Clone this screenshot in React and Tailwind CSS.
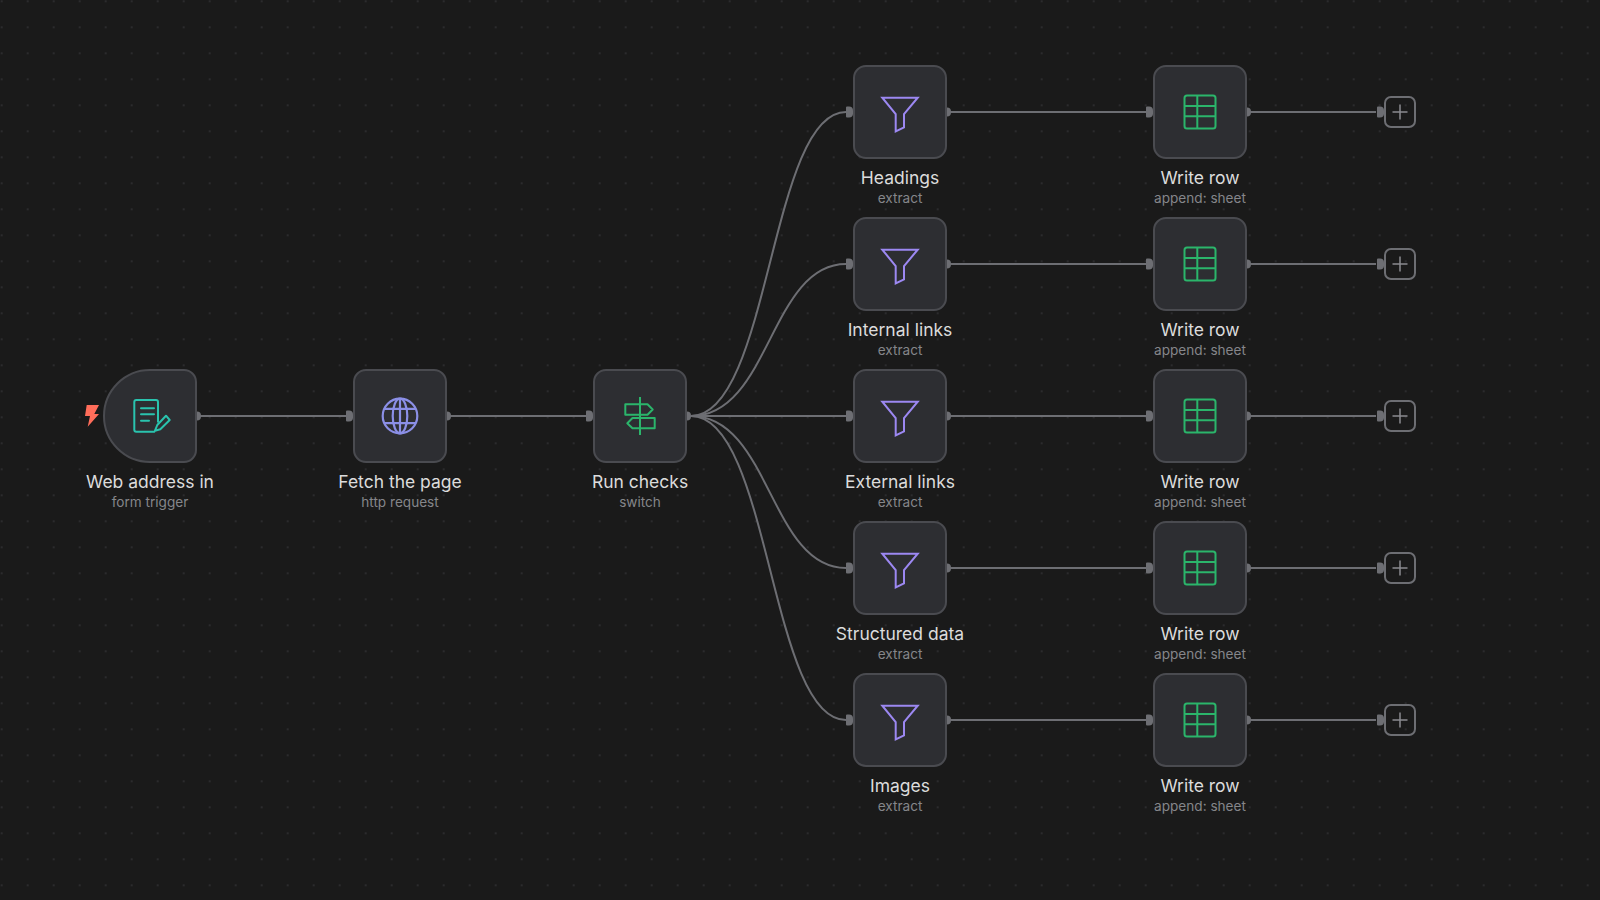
const ROWS = [112, 264, 416, 568, 720]
const EXTRACTS = ['Headings', 'Internal links', 'External links', 'Structured data', 'Images']
const SWITCH_OUT = 691

function FormIcon() {
  return (
    <svg width="44" height="44" viewBox="-22 -22 44 44" fill="none" stroke="#2ac3ae" strokeWidth="2" strokeLinecap="round" strokeLinejoin="round">
      <path d="M4.300 15.700H-13.700a2 2 0 0 1-2-2V-14a2 2 0 0 1 2-2H6a2 2 0 0 1 2 2V5.700" />
      <path d="M-9-7.700H4M-9-1.700H4M-9 4.700H-1" />
      <path d="M7.300 9L16-.3 19.700 4 10.300 13.300 5 14.700z" />
    </svg>
  )
}

function GlobeIcon() {
  return (
    <svg width="40" height="40" viewBox="-20 -20 40 40" fill="none" stroke="#8b8fe6" strokeWidth="2.200">
      <circle r="17.300" />
      <ellipse rx="7.300" ry="17.300" />
      <path d="M0-17.300V17.300M-15.500-7.200H15.500M-15.500 7.200H15.500" />
    </svg>
  )
}

function SignIcon() {
  return (
    <svg width="44" height="44" viewBox="-22 -22 44 44" fill="none" stroke="#2bb56b" strokeWidth="2" strokeLinejoin="round">
      <path d="M0-19V19" />
      <path d="M-14.700-11.700H7.500L12.700-6.500 7.500-1.300H-14.700z" />
      <path d="M14.700 2H-7.500L-12.700 7.200-7.500 12.300H14.700z" />
    </svg>
  )
}

function FunnelIcon() {
  return (
    <svg width="44" height="44" viewBox="-22 -22 44 44" fill="none" stroke="#9c88f2" strokeWidth="2" strokeLinejoin="miter">
      <path d="M-17.700-14.300H17.700L4 2V15.300L-4.300 19.300V2z" />
    </svg>
  )
}

function TableIcon() {
  return (
    <svg width="40" height="40" viewBox="-20 -20 40 40" fill="none" stroke="#2bb56b" strokeWidth="2">
      <rect x="-15.500" y="-16.500" width="31" height="33" rx="2.500" />
      <path d="M-2.700-16.500V16.500M-15.500-6H15.500M-15.500 4.300H15.500" />
    </svg>
  )
}

function Bolt() {
  return (
    <svg className="absolute left-[-20px] top-[34px]" width="14" height="22" viewBox="0 0 14 22" fill="#ff6d5a">
      <path d="M1.700 0H14L9.300 9H14L2.700 21.700 5 11H0z" />
    </svg>
  )
}

function Node({ x, y, label, sub, trigger, input = true, children }) {
  return (
    <div className="absolute flex w-[94px] flex-col items-center" style={{ left: x - 47, top: y - 47 }}>
      <div
        className={`relative flex h-[94px] w-[94px] items-center justify-center border-2 border-[#4a4b50] bg-[#2d2e32] ${
          trigger ? 'rounded-l-[47px] rounded-r-[13px]' : 'rounded-[13px]'
        }`}
      >
        {children}
        {trigger && <Bolt />}
        {input && <span className="absolute left-[-9px] top-1/2 h-[11px] w-[7px] -translate-y-1/2 rounded-l-[1px] rounded-r-[4px] bg-[#6d6e73]" />}
        <span className="absolute right-[-6px] top-1/2 h-[9px] w-[4px] -translate-y-1/2 rounded-r-full bg-[#6d6e73]" />
      </div>
      <div className="mt-[8px] whitespace-nowrap text-[17.500px] leading-[22px] text-[#dcdcdc]">{label}</div>
      <div className="whitespace-nowrap text-[13.600px] leading-[18px] text-[#85868a]">{sub}</div>
    </div>
  )
}

function PlusBox({ x, y }) {
  return (
    <div
      className="absolute flex h-8 w-8 items-center justify-center rounded-[7px] border-2 border-[#6d6e73]"
      style={{ left: x - 16, top: y - 16 }}
    >
      <span className="absolute left-[-9px] top-1/2 h-[11px] w-[7px] -translate-y-1/2 rounded-l-[1px] rounded-r-[4px] bg-[#6d6e73]" />
      <svg width="18" height="18" viewBox="0 0 18 18" stroke="#8a8b90" strokeWidth="1.500">
        <path d="M9 1.500V16.500M1.500 9H16.500" />
      </svg>
    </div>
  )
}

export default function App() {
  return (
    <div
      className="relative h-[900px] w-full overflow-hidden bg-[#1a1a1a] bg-[radial-gradient(circle,#2b2b2d_1px,transparent_1.500px)] [background-position:-11.300px_-11.700px] [background-size:26px_26px] font-['Inter',sans-serif]"
    >
      <svg className="absolute inset-0" width="1600" height="900" fill="none" stroke="#6d6e73" strokeWidth="2">
        <path d="M200 416H346" />
        <path d="M450 416H586" />
        {ROWS.map((y) => (
          <g key={y}>
            <path d={`M${SWITCH_OUT} 416C770 416 770 ${y} 846 ${y}`} />
            <path d={`M950 ${y}H1146`} />
            <path d={`M1250 ${y}H1376`} />
          </g>
        ))}
      </svg>

      <Node x={150} y={416} label="Web address in" sub="form trigger" trigger input={false}>
        <FormIcon />
      </Node>
      <Node x={400} y={416} label="Fetch the page" sub="http request">
        <GlobeIcon />
      </Node>
      <Node x={640} y={416} label="Run checks" sub="switch">
        <SignIcon />
      </Node>

      {ROWS.map((y, i) => (
        <div key={y}>
          <Node x={900} y={y} label={EXTRACTS[i]} sub="extract">
            <FunnelIcon />
          </Node>
          <Node x={1200} y={y} label="Write row" sub="append: sheet">
            <TableIcon />
          </Node>
          <PlusBox x={1400} y={y} />
        </div>
      ))}
    </div>
  )
}
